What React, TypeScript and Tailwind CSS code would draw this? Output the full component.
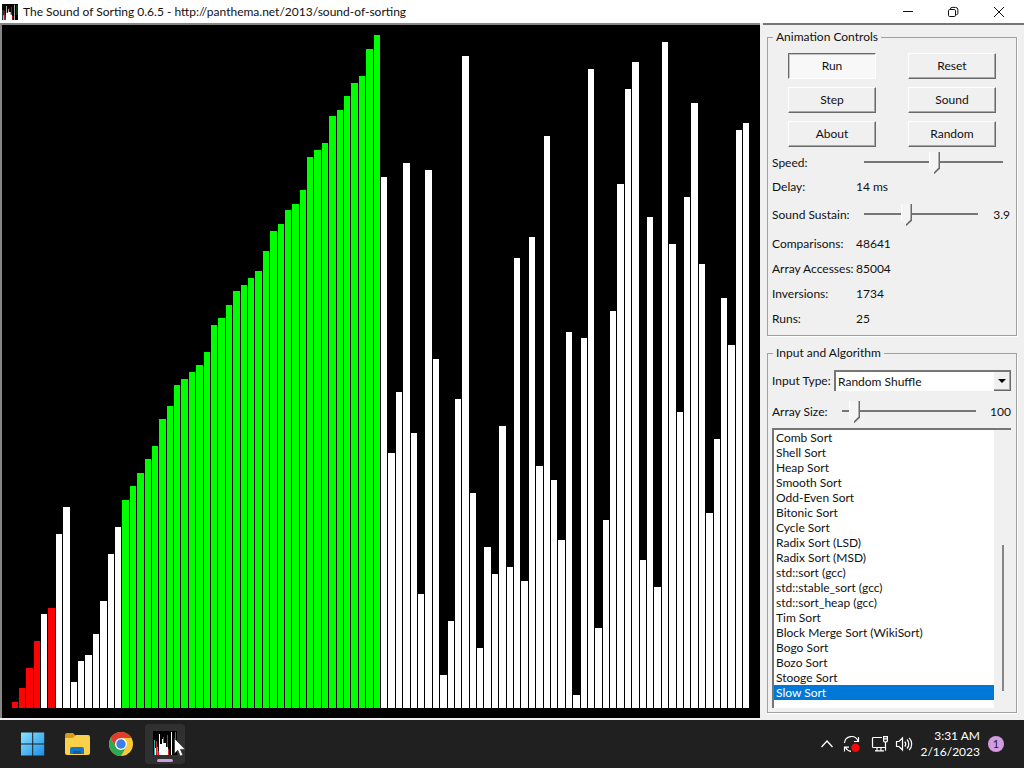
import { useState } from "react";

const SORTED_RUN = [
  31, 33, 35, 37, 39, 43, 45, 48, 49, 50, 51, 53, 57, 58, 60, 62, 63, 64, 65, 68,
  71, 72, 74, 75, 77, 82, 83, 84, 88, 89, 91, 93, 94, 98, 100,
];

const VALUES = [
  1, 3, 6, 10, 14, 15, 26, 30, 4, 7, 8, 11, 16, 23, 27,
  ...SORTED_RUN,
  79, 38, 47, 81, 41, 17, 80, 52, 5, 13, 46, 97, 32, 9, 24, 20, 42, 21, 67, 19,
  70, 36, 85, 34, 25, 56, 2, 55, 95, 12, 28, 59, 78, 92, 96, 22, 73, 18, 99, 69,
  44, 76, 90, 66, 29, 40, 61, 54, 86, 87,
];

const TOUCHED = [0, 1, 2, 3, 5];

const ALGORITHMS = [
  "Comb Sort",
  "Shell Sort",
  "Heap Sort",
  "Smooth Sort",
  "Odd-Even Sort",
  "Bitonic Sort",
  "Cycle Sort",
  "Radix Sort (LSD)",
  "Radix Sort (MSD)",
  "std::sort (gcc)",
  "std::stable_sort (gcc)",
  "std::sort_heap (gcc)",
  "Tim Sort",
  "Block Merge Sort (WikiSort)",
  "Bogo Sort",
  "Bozo Sort",
  "Stooge Sort",
  "Slow Sort",
];

const STATS = [
  ["Comparisons:", "48641"],
  ["Array Accesses:", "85004"],
  ["Inversions:", "1734"],
  ["Runs:", "25"],
];

function barColor(index: number) {
  if (TOUCHED.includes(index)) return "#fb0404";
  if (index >= 15 && index < 15 + SORTED_RUN.length) return "#00ff00";
  return "#ffffff";
}

function SortChart() {
  return (
    <svg
      viewBox="0 0 758 693"
      preserveAspectRatio="none"
      shapeRendering="crispEdges"
      className="block h-full w-full bg-black"
      role="img"
      aria-label="Array values"
    >
      {VALUES.map((value, i) => {
        const x = Math.floor(i * 7.39);
        const height = Math.floor(value * 6.73);
        return (
          <rect
            key={i}
            x={10 + x}
            y={683 - height}
            width={Math.floor(i * 7.39 + 6.38) - x}
            height={height}
            fill={barColor(i)}
          />
        );
      })}
    </svg>
  );
}

function AppIcon({ className }: { className: string }) {
  return (
    <svg viewBox="0 0 24 24" className={className} aria-hidden="true">
      <path fill="#000" d="M0 0h24v24H0z" />
      <path fill="#2bb6b0" d="M1 9h1v15H1zM4 16h1v8H4z" />
      <path fill="#e02020" d="M3 10h1v14H3zM10 6h1v8h-1zM14 4h1v12h-1z" />
      <path fill="#fff" d="M2 17h1v7H2zM6 3h1v21H6zM7 13h3v11H7zM9 8h1v6H9zM10 12h3v12h-3zM13 16h2v8h-2zM18 1h1v23h-1z" />
      <path fill="#e02020" d="M5 20h1v4H5zM15 18h1v6h-1z" />
      <path fill="#18a030" d="M22 1h1v15h-1z" />
    </svg>
  );
}

function TitleBar() {
  return (
    <header className="flex h-[23px] shrink-0 items-center bg-white pr-[2px]">
      <AppIcon className="ml-[2px] size-4" />
      <h1 className="ml-[5px] flex-1 whitespace-nowrap text-[12px] leading-5">
        The Sound of Sorting 0.6.5 - http://panthema.net/2013/sound-of-sorting
      </h1>
      <div className="flex h-5 items-center">
        <button aria-label="Minimize" className="flex w-[45px] justify-center">
          <svg viewBox="0 0 12 12" className="size-3" fill="none" stroke="#111">
            <path d="M1 5.500h10" />
          </svg>
        </button>
        <button aria-label="Restore" className="flex w-[45px] justify-center">
          <svg viewBox="0 0 12 12" className="size-3" fill="none" stroke="#111">
            <rect x="1.5" y="3.5" width="7" height="7" rx="1.2" />
            <path d="M3.5 3.3V3a1.6 1.6 0 0 1 1.6-1.6h3.4a2.4 2.4 0 0 1 2.4 2.4v3.4A1.6 1.6 0 0 1 9.300 8.700H8.500" />
          </svg>
        </button>
        <button aria-label="Close" className="flex w-[47px] justify-center">
          <svg viewBox="0 0 12 12" className="size-3" fill="none" stroke="#111">
            <path d="M1 1l10 10M11 1L1 11" />
          </svg>
        </button>
      </div>
    </header>
  );
}

function PanelButton({ label, pressed }: { label: string; pressed?: boolean }) {
  return (
    <button
      aria-pressed={pressed}
      className={`h-[26px] border text-center leading-5 ${
        pressed
          ? "border-t-[#696969] border-r-white border-b-white border-l-[#696969] bg-[#f8f8f8] shadow-[inset_1px_1px_#c4c4c4]"
          : "border-t-white border-r-[#696969] border-b-[#696969] border-l-white bg-[#f0f0f0] shadow-[inset_-1px_-1px_#a8a8a8]"
      }`}
    >
      {label}
    </button>
  );
}

type SliderProps = {
  id: string;
  max: number;
  initial: number;
  className: string;
};

function Slider({ id, max, initial, className }: SliderProps) {
  const [value, setValue] = useState(initial);
  return (
    <input
      id={id}
      type="range"
      min={0}
      max={max}
      value={value}
      onChange={(e) => setValue(Number(e.target.value))}
      className={`h-[22px] min-w-0 appearance-none bg-[linear-gradient(#767676,#767676)] bg-[length:100%_2px] bg-[position:0_9px] bg-no-repeat [&::-webkit-slider-thumb]:h-[22px] [&::-webkit-slider-thumb]:w-[11px] [&::-webkit-slider-thumb]:appearance-none [&::-webkit-slider-thumb]:bg-[linear-gradient(135deg,#f4f4f4_32%,#696969_36%),linear-gradient(to_left,#696969_1px,#b0b0b0_1px,#b0b0b0_2px,#f4f4f4_2px,#f4f4f4_10px,#fff_10px)] [&::-webkit-slider-thumb]:bg-[length:6px_6px,100%_100%] [&::-webkit-slider-thumb]:bg-[position:100%_100%,0_0] [&::-webkit-slider-thumb]:bg-no-repeat [&::-webkit-slider-thumb]:[clip-path:polygon(0_0,100%_0,100%_75%,50%_100%,0_75%)] ${className}`}
    />
  );
}

function AnimationControls() {
  return (
    <fieldset className="min-w-0 border border-[#a0a0a0] pb-1 shadow-[1px_1px_#fff]">
      <legend className="ml-[5px] h-5 px-[3px] leading-5">Animation Controls</legend>
      <div className="grid grid-cols-2 gap-x-8 gap-y-2 px-5 pt-[6px]">
        <PanelButton label="Run" pressed />
        <PanelButton label="Reset" />
        <PanelButton label="Step" />
        <PanelButton label="Sound" />
        <PanelButton label="About" />
        <PanelButton label="Random" />
      </div>
      <div className="mt-1 flex h-6 items-center pl-1">
        <label htmlFor="speed" className="w-[84px]">
          Speed:
        </label>
        <Slider id="speed" max={128} initial={65} className="mr-[13px] ml-2 flex-1" />
      </div>
      <div className="flex h-6 items-center pl-1">
        <span className="w-[84px]">Delay:</span>
        <span>14 ms</span>
      </div>
      <div className="flex h-8 items-center pl-1">
        <label htmlFor="sustain" className="w-[84px] whitespace-nowrap">
          Sound Sustain:
        </label>
        <Slider id="sustain" max={103} initial={37} className="ml-2 flex-1" />
        <output htmlFor="sustain" className="mr-[6px] w-8 text-right">
          3.9
        </output>
      </div>
      <dl>
        {STATS.map(([name, value]) => (
          <div key={name} className="flex h-[25px] items-center pl-1">
            <dt className="w-[84px] whitespace-nowrap">{name}</dt>
            <dd>{value}</dd>
          </div>
        ))}
      </dl>
    </fieldset>
  );
}

function InputAndAlgorithm() {
  const [algorithm, setAlgorithm] = useState("Slow Sort");
  return (
    <fieldset className="mt-[7px] flex min-w-0 flex-1 flex-col border border-[#a0a0a0] pb-1 shadow-[1px_1px_#fff]">
      <legend className="ml-[5px] h-5 px-[3px] leading-5">Input and Algorithm</legend>
      <div className="mt-[7px] flex items-center pr-[5px] pl-1">
        <label htmlFor="input-type" className="w-[62px] whitespace-nowrap">
          Input Type:
        </label>
        <div className="relative flex-1">
          <select
            id="input-type"
            className="block h-[21px] w-full appearance-none border-t-2 border-l-2 border-[#767676] bg-white pl-[2px] leading-4"
          >
            <option>Random Shuffle</option>
          </select>
          <span className="pointer-events-none absolute top-[2px] right-0 flex h-[19px] w-[17px] items-center justify-center border-r border-b border-[#696969] bg-[#f0f0f0] shadow-[inset_-1px_-1px_#a8a8a8]">
            <svg viewBox="0 0 8 4" className="h-1 w-2">
              <path d="M0 0h8L4 4z" />
            </svg>
          </span>
        </div>
      </div>
      <div className="mt-[9px] flex h-6 items-center pr-[5px] pl-1">
        <label htmlFor="array-size" className="w-[70px] whitespace-nowrap">
          Array Size:
        </label>
        <Slider id="array-size" max={123} initial={7} className="flex-1" />
        <output htmlFor="array-size" className="w-[35px] text-right">
          100
        </output>
      </div>
      <div className="mt-[4px] mr-[5px] ml-1 flex flex-1 border-t-2 border-l-2 border-[#767676] bg-white">
        <select
          size={18}
          aria-label="Algorithm"
          value={algorithm}
          onChange={(e) => setAlgorithm(e.target.value)}
          className="min-w-0 flex-1 appearance-none overflow-hidden bg-white outline-none"
        >
          {ALGORITHMS.map((name) => (
            <option
              key={name}
              className="block h-[15px] min-h-0 p-0 pl-[2px] leading-[15px] checked:bg-[linear-gradient(#0078d7,#0078d7)] checked:text-white"
            >
              {name}
            </option>
          ))}
        </select>
        <div className="flex w-[17px] flex-col items-center bg-[#f0f0f0] pb-[17px]">
          <div className="flex-1" />
          <div className="h-[146px] w-[2px] bg-[#868686]" />
        </div>
      </div>
    </fieldset>
  );
}

function Taskbar() {
  return (
    <footer className="flex h-12 shrink-0 items-center bg-[#202020] text-white">
      <nav className="flex flex-1 items-center pl-[21px]">
        <button aria-label="Start">
          <svg viewBox="0 0 24 24" className="size-6">
            <defs>
              <linearGradient id="win" x1="0" y1="0" x2="1" y2="1">
                <stop offset="0" stopColor="#8be4ff" />
                <stop offset="1" stopColor="#1a8fe8" />
              </linearGradient>
            </defs>
            <path fill="url(#win)" d="M0 .5h11.200v11H0zM12.200.5h11v11h-11zM0 12.500h11.200v11H0zM12.200 12.500h11v11h-11z" />
          </svg>
        </button>
        <button aria-label="File Explorer" className="ml-5">
          <svg viewBox="0 0 25 24" className="h-6 w-[25px]">
            <path fill="#d99a1c" d="M0 3a2 2 0 0 1 2-2h6l3 3v4H0z" />
            <path fill="#fbd04b" d="M0 6h8l3-3h12a2 2 0 0 1 2 2v16a2 2 0 0 1-2 2H2a2 2 0 0 1-2-2z" />
            <path fill="#1677c7" d="M5 22v-5a2 2 0 0 1 2-2h10a2 2 0 0 1 2 2v5z" />
            <path fill="#0d5ea8" d="M8 19h8v3H8z" />
          </svg>
        </button>
        <button aria-label="Google Chrome" className="ml-[19px]">
          <svg viewBox="0 0 24 24" className="size-6">
            <circle cx="12" cy="12" r="12" fill="#fcc934" />
            <path fill="#e33b2e" d="M12 12V6h10.400A12 12 0 0 0 1.610 6L6.800 15z" />
            <path fill="#2da94f" d="M1.610 6A12 12 0 0 0 12 24l5.200-9L12 12l-5.200 3z" />
            <circle cx="12" cy="12" r="6" fill="#fff" />
            <circle cx="12" cy="12" r="4.700" fill="#3f7de8" />
          </svg>
        </button>
        <button
          aria-label="The Sound of Sorting"
          className="relative ml-3 flex h-10 w-10 flex-col items-center justify-end rounded bg-[#303030] pb-[2px]"
        >
          <AppIcon className="mb-[4px] size-6" />
          <span className="h-[3px] w-4 rounded-full bg-[#cfa0d8]" />
          <svg viewBox="0 0 12 19" className="absolute top-[14px] left-[29px] h-[19px] w-3">
            <path fill="#fff" stroke="#222" strokeWidth=".6" d="M.5.5v15l3.400-3.200 2.300 5.700 2.600-1.100-2.400-5.500h4.800z" />
          </svg>
        </button>
      </nav>
      <div className="flex items-center pr-5">
        <button aria-label="Show hidden icons">
          <svg viewBox="0 0 14 16" className="h-4 w-[14px]" fill="none" stroke="#fff" strokeWidth="1.300">
            <path d="M1.500 11L7 5l5.500 6" />
          </svg>
        </button>
        <button aria-label="Windows Update" className="ml-[9px]">
          <svg viewBox="0 0 18 18" className="size-[18px]" fill="none" stroke="#fff" strokeWidth="1.200">
            <path d="M1.500 8a7 7 0 0 1 13.500-2M15.500 2v4.500H11" />
            <path d="M8 16.300a7 7 0 0 1-5.500-3.800M1.500 16.500v-4.300H6" />
            <circle cx="12.500" cy="12.800" r="4.200" fill="#f40b0b" stroke="none" />
          </svg>
        </button>
        <button aria-label="Network" className="ml-[10px]">
          <svg viewBox="0 0 18 18" className="size-[18px]" fill="none" stroke="#fff" strokeWidth="1.200">
            <path d="M11 2.500H2.500a1 1 0 0 0-1 1v8a1 1 0 0 0 1 1H14M6 12.500v3M10 12.500v3M4 15.900h9" />
            <path d="M12.600 1.600h3.800v4.200a1 1 0 0 1-1 1h-1.800a1 1 0 0 1-1-1zM12.600 3.800h3.800M14.500 6.800v9" />
          </svg>
        </button>
        <button aria-label="Volume" className="ml-[6px]">
          <svg viewBox="0 0 18 18" className="size-[18px]" fill="none" stroke="#fff" strokeWidth="1.200">
            <path d="M1.500 6.500H4L7.500 3v12L4 11.500H1.500zM9.800 6.500a4 4 0 0 1 0 5M12 4.500a6.500 6.500 0 0 1 0 9M14.200 2.800a9 9 0 0 1 0 12.400" />
          </svg>
        </button>
        <time className="w-[67px] text-right text-[12px] leading-4 whitespace-nowrap">
          3:31 AM
          <br />
          2/16/2023
        </time>
        <button
          aria-label="1 notification"
          className="ml-2 size-4 rounded-full bg-[#d49be0] text-center text-[11px] leading-4 text-[#222]"
        >
          1
        </button>
      </div>
    </footer>
  );
}

export default function App() {
  return (
    <div className="flex h-screen flex-col overflow-hidden bg-[#f0f0f0] font-['Lato','Liberation_Sans',sans-serif] text-[12px] leading-4 text-[#111]">
      <TitleBar />
      <main className="flex min-h-0 flex-1">
        <section className="mb-[2px] min-w-0 flex-1 border-t-2 border-l-2 border-[#868686]">
          <SortChart />
        </section>
        <aside className="ml-[3px] flex w-[261px] flex-col border-t-2 border-[#767676] pt-[2px] pr-[7px] pb-[7px] pl-1">
          <AnimationControls />
          <InputAndAlgorithm />
        </aside>
      </main>
      <Taskbar />
    </div>
  );
}
